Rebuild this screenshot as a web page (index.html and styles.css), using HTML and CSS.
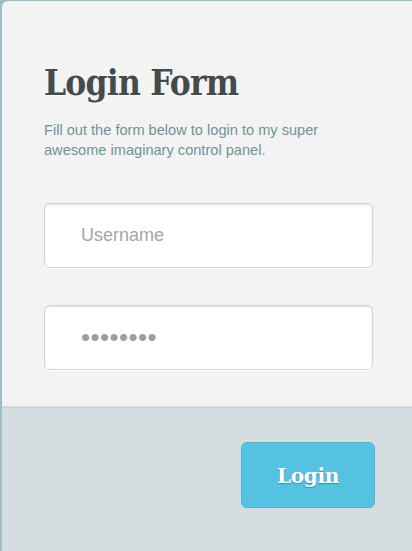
FILE: index.html
```html
<!DOCTYPE html>
<html>
<head>
<meta charset="utf-8">
<link rel="stylesheet" href="styles.css">
</head>
<body>
<div class="page">
  <div class="card">
    <div class="content">
      <h1 class="title">Login Form</h1>
      <p class="lead">Fill out the form below to login to my super awesome imaginary control panel.</p>
      <div class="field"><span class="placeholder">Username</span></div>
      <div class="field field-pass"><span class="dots">&#8226;&#8226;&#8226;&#8226;&#8226;&#8226;&#8226;&#8226;</span></div>
    </div>
    <div class="footer">
      <button class="btn">Login</button>
    </div>
  </div>
</div>
</body>
</html>
```
FILE: styles.css
```css
html, body {
  margin: 0;
  padding: 0;
  height: 100%;
  background: #9fbcc8;
}
.page {
  padding: 1px 0 0 2px;
  height: 100%;
  box-sizing: border-box;
}
.card {
  background: #f3f3f3;
  border-top-left-radius: 6px;
  height: 100%;
  display: flex;
  flex-direction: column;
  overflow: hidden;
}
.content {
  padding: 0 39px 0 42px;
  height: 406px;
  box-sizing: border-box;
  border-bottom: 1px solid #dcdcdc;
}
.title {
  margin: 0;
  padding-top: 61px;
  font-family: "DejaVu Serif Condensed", "DejaVu Serif", serif;
  font-weight: bold;
  font-size: 35px;
  letter-spacing: -0.8px;
  line-height: 42px;
  color: #434b4b;
  text-shadow: 0 1px 0 #fff;
}
.lead {
  margin: 16px 0 0 0;
  font-family: "Liberation Sans", Arial, sans-serif;
  font-size: 14.6px;
  line-height: 20px;
  color: #6f9397;
  width: 300px;
}
.field {
  margin-top: 43px;
  height: 65px;
  box-sizing: border-box;
  background: #fff;
  border: 1px solid #d4d4d4;
  border-radius: 5px;
  box-shadow: inset 0 1px 2px rgba(0,0,0,0.12), 0 1px 0 #fff;
  display: flex;
  align-items: center;
  padding-left: 36px;
}
.field-pass {
  margin-top: 37px;
}
.placeholder {
  font-family: "Liberation Sans", Arial, sans-serif;
  font-size: 18px;
  color: #a6a6a6;
}
.dots {
  font-family: "Liberation Sans", Arial, sans-serif;
  font-size: 26px;
  letter-spacing: 0.4px;
  color: #9e9e9e;
}
.footer {
  flex: 1;
  background: #d4dde0;
  border-top: 1px solid #c8d2d5;
  display: flex;
  justify-content: flex-end;
  align-items: flex-start;
  padding: 34px 37px 0 0;
}
.btn {
  width: 134px;
  height: 66px;
  background: #56c2e1;
  border: 1px solid #4fb3d2;
  border-radius: 6px;
  color: #fff;
  font-family: "DejaVu Serif", serif;
  font-weight: bold;
  font-size: 20px;
  letter-spacing: -0.3px;
  line-height: 66px;
  text-shadow: 0 1px 1px rgba(0,0,0,0.3);
  padding: 0;
}
```
